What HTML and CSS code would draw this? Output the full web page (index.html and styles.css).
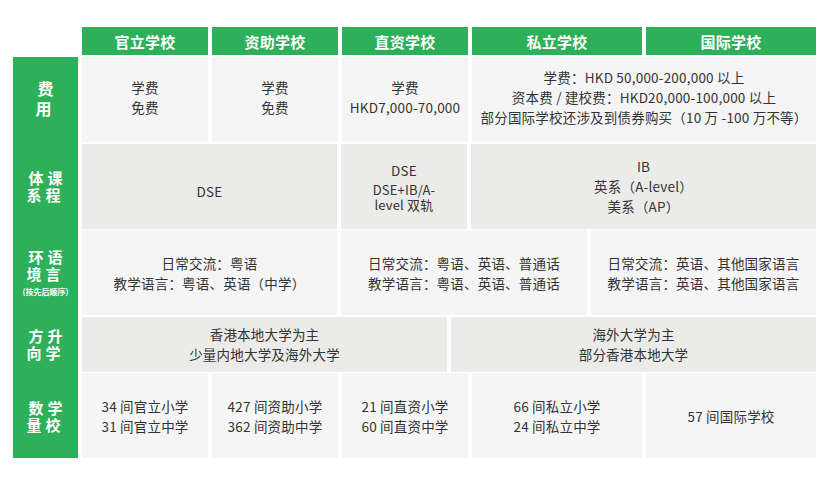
FILE: index.html
```html
<!DOCTYPE html>
<html lang="zh">
<head>
<meta charset="utf-8">
<link rel="stylesheet" href="styles.css">
</head>
<body>
<div class="page">
  <div class="head">
    <div class="hcell w126">官立学校</div>
    <div class="hcell w126">资助学校</div>
    <div class="hcell w126">直资学校</div>
    <div class="hcell w170">私立学校</div>
    <div class="hcell w170">国际学校</div>
  </div>
  <div class="body">
    <div class="labels">
      <div class="label r85 single">费<br>用</div>
      <div class="label r85">体课<br>系程</div>
      <div class="label r85">环语<br>境言<span class="small">(按先后顺序)</span></div>
      <div class="label r55">方升<br>向学</div>
      <div class="label r85">数学<br>量校</div>
    </div>
    <div class="rows">
      <div class="row r85 light up">
        <div class="cell w126">学费<br>免费</div>
        <div class="cell w126">学费<br>免费</div>
        <div class="cell w126">学费<br>HKD7,000-70,000</div>
        <div class="cell w344">学费：HKD 50,000-200,000 以上<br>资本费 / 建校费：HKD20,000-100,000 以上<br>部分国际学校还涉及到债券购买（10 万 -100 万不等）</div>
      </div>
      <div class="row r85 dark">
        <div class="cell w255 down">DSE</div>
        <div class="cell w126"><p class="p1">DSE</p><p class="p2">DSE+IB/A-<br>level 双轨</p></div>
        <div class="cell w345">IB<br>英系（A-level）<br>美系（AP）</div>
      </div>
      <div class="row r85 light">
        <div class="cell w255">日常交流：粤语<br>教学语言：粤语、英语（中学）</div>
        <div class="cell w246">日常交流：粤语、英语、普通话<br>教学语言：粤语、英语、普通话</div>
        <div class="cell w225">日常交流：英语、其他国家语言<br>教学语言：英语、其他国家语言</div>
      </div>
      <div class="row r55 dark">
        <div class="cell w365">香港本地大学为主<br>少量内地大学及海外大学</div>
        <div class="cell w365">海外大学为主<br>部分香港本地大学</div>
      </div>
      <div class="row r85 light">
        <div class="cell w126">34 间官立小学<br>31 间官立中学</div>
        <div class="cell w126">427 间资助小学<br>362 间资助中学</div>
        <div class="cell w126">21 间直资小学<br>60 间直资中学</div>
        <div class="cell w170">66 间私立小学<br>24 间私立中学</div>
        <div class="cell w170">57 间国际学校</div>
      </div>
    </div>
  </div>
</div>
</body>
</html>
```

FILE: styles.css
```css
* { box-sizing: border-box; }
html, body { margin: 0; padding: 0; background: #fff; }
body {
  font-family: "Noto Sans CJK SC", "Noto Sans", sans-serif;
  color: #333;
}
.page {
  padding: 27px 0 0 13px;
  width: 832px;
}
.head {
  display: flex;
  gap: 4px;
  margin-left: 69px;
  height: 28px;
}
.hcell {
  background: #2eb05a;
  color: #fff;
  font-weight: 700;
  font-size: 15px;
  display: flex;
  align-items: center;
  justify-content: center;
  letter-spacing: 0.3px;
}
.body {
  display: flex;
  gap: 4px;
  margin-top: 2px;
}
.labels {
  width: 65px;
  background: #2eb05a;
  display: flex;
  flex-direction: column;
  gap: 1.5px;
}
.label {
  color: #fff;
  font-weight: 700;
  font-size: 15px;
  line-height: 17px;
  letter-spacing: 4px;
  text-indent: 4px;
  display: flex;
  flex-direction: column;
  align-items: center;
  justify-content: center;
  text-align: center;
}
.label.single { font-size: 16px; line-height: 20px; padding-bottom: 3px; }
.small {
  display: block;
  font-size: 8px;
  line-height: 11px;
  letter-spacing: 0;
  text-indent: 0;
  margin-top: 4px;
}
.rows {
  display: flex;
  flex-direction: column;
  gap: 1.5px;
}
.row {
  display: flex;
  gap: 4px;
}
.r85 { height: 85px; }
.r55 { height: 55px; }
.cell {
  height: 100%;
  display: flex;
  flex-direction: column;
  align-items: center;
  justify-content: center;
  text-align: center;
  font-size: 13.5px;
  line-height: 20px;
  letter-spacing: 0.2px;
}
.light .cell { background: #f5f5f5; }
.dark .cell { background: #ebebe9; }
.up .cell { padding-bottom: 5px; }
.down { padding-top: 9px; }
.p1, .p2 { margin: 0; }
.p1 { line-height: 20px; }
.p2 { font-size: 13px; line-height: 15px; margin-top: 2px; }
.w126 { width: 126px; }
.w170 { width: 170px; }
.w255 { width: 255px; }
.w344 { width: 344px; }
.w345 { width: 345px; }
.w246 { width: 246px; }
.w225 { width: 225px; }
.w365 { width: 365px; }
```
